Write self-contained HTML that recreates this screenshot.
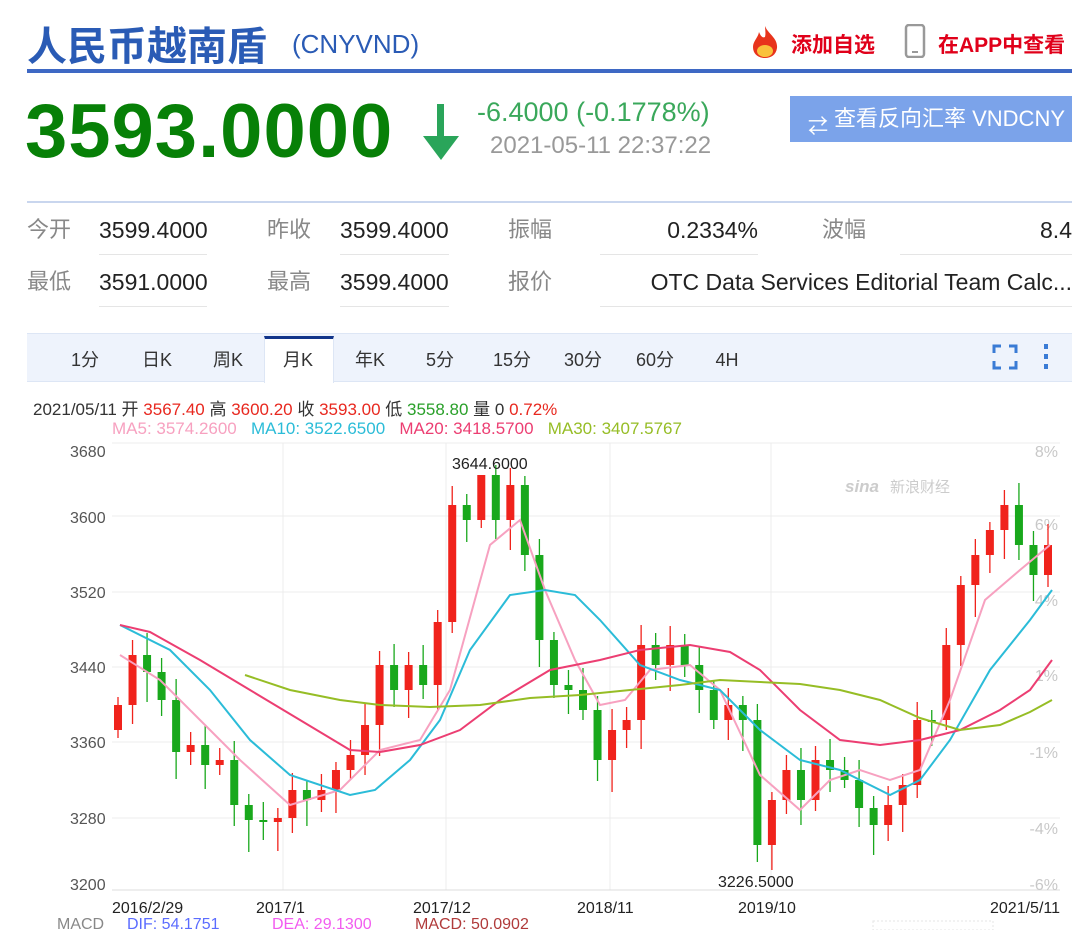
<!DOCTYPE html><html><head><meta charset="utf-8"><style>
*{margin:0;padding:0;box-sizing:border-box}
body{width:1080px;height:930px;overflow:hidden;background:#fff;font-family:"Liberation Sans","Noto Sans CJK SC",sans-serif;position:relative}
.a{position:absolute;white-space:nowrap}
.lab{color:#888;font-size:22px;line-height:28px}
.val{color:#222;font-size:23px;line-height:28px}
.ul{position:absolute;height:1px;background:#e5e5e5}
.tab{position:absolute;top:348px;font-size:18px;line-height:24px;color:#333;transform:translateX(-50%)}
</style></head><body>
<div class="a" style="left:27px;top:14px;font-size:40px;font-weight:bold;color:#2a5bb5">人民币越南盾</div>
<div class="a" style="left:292px;top:29px;font-size:26px;color:#2a5bb5">(CNYVND)</div>
<svg class="a" style="left:748px;top:24px" width="34" height="36" viewBox="0 0 34 36"><path d="M17 2C20 10 30 14 29 24 28 31 23 34 17 34 10 34 5 30 5 23 5 17 10 14 11 8 13 13 15 14 17 13 18 9 17 5 17 2Z" fill="#e8341c"/><ellipse cx="17" cy="27" rx="8" ry="6" fill="#f9c23c"/></svg>
<div class="a" style="left:791px;top:29px;font-size:21px;font-weight:bold;color:#e0001a">添加自选</div>
<svg class="a" style="left:904px;top:24px" width="22" height="34"><rect x="2" y="1" width="18" height="32" rx="3" fill="none" stroke="#999" stroke-width="2.5"/><line x1="8" y1="28" x2="14" y2="28" stroke="#999" stroke-width="2"/></svg>
<div class="a" style="left:938px;top:29px;font-size:21px;font-weight:bold;color:#e0001a">在APP中查看</div>
<div class="a" style="left:27px;top:69px;width:1045px;height:4px;background:#3e68c4"></div>
<div class="a" style="left:25px;top:88px;font-size:76px;font-weight:bold;color:#078007;letter-spacing:1px">3593.0000</div>
<svg class="a" style="left:420px;top:102px" width="42" height="60"><rect x="17" y="2" width="7" height="36" fill="#2aa55a"/><path d="M3 34 L39 34 L21 58Z" fill="#2aa55a"/></svg>
<div class="a" style="left:477px;top:97px;font-size:27px;color:#3aa85b">-6.4000 (-0.1778%)</div>
<div class="a" style="left:490px;top:132px;font-size:24px;color:#999">2021-05-11 22:37:22</div>
<div class="a" style="left:790px;top:96px;width:282px;height:46px;background:#7ba3ea;color:#fff;font-size:22px;line-height:46px;padding-left:44px">查看反向汇率 VNDCNY</div>
<div class="a" style="left:808px;top:110px;color:#fff;font-size:20px">⇄</div>
<div class="a" style="left:27px;top:201px;width:1045px;height:2px;background:#c9d6ee"></div>
<div class="a lab" style="left:27px;top:216px">今开</div><div class="a val" style="left:99px;top:216px">3599.4000</div>
<div class="a lab" style="left:267px;top:216px">昨收</div><div class="a val" style="left:340px;top:216px">3599.4000</div>
<div class="a lab" style="left:508px;top:216px">振幅</div><div class="a val" style="right:322px;top:216px">0.2334%</div>
<div class="a lab" style="left:822px;top:216px">波幅</div><div class="a val" style="right:8px;top:216px">8.4</div>
<div class="a lab" style="left:27px;top:268px">最低</div><div class="a val" style="left:99px;top:268px">3591.0000</div>
<div class="a lab" style="left:267px;top:268px">最高</div><div class="a val" style="left:340px;top:268px">3599.4000</div>
<div class="a lab" style="left:508px;top:268px">报价</div><div class="a val" style="right:8px;top:268px">OTC Data Services Editorial Team Calc...</div>
<div class="ul" style="left:99px;top:254px;width:108px"></div><div class="ul" style="left:340px;top:254px;width:109px"></div><div class="ul" style="left:600px;top:254px;width:158px"></div><div class="ul" style="left:900px;top:254px;width:172px"></div>
<div class="ul" style="left:99px;top:306px;width:108px"></div><div class="ul" style="left:340px;top:306px;width:109px"></div><div class="ul" style="left:600px;top:306px;width:472px"></div>
<div class="a" style="left:27px;top:333px;width:1045px;height:49px;background:#eef3fc;border-top:1px solid #dde6f5;border-bottom:1px solid #dde6f5"></div>
<div class="a" style="left:264px;top:336px;width:70px;height:47px;background:#fff;border-top:3px solid #12358a;border-left:1px solid #dde6f5;border-right:1px solid #dde6f5"></div>
<div class="tab" style="left:85px">1分</div><div class="tab" style="left:157px">日K</div><div class="tab" style="left:228px">周K</div><div class="tab" style="left:298px">月K</div><div class="tab" style="left:370px">年K</div><div class="tab" style="left:440px">5分</div><div class="tab" style="left:512px">15分</div><div class="tab" style="left:583px">30分</div><div class="tab" style="left:655px">60分</div><div class="tab" style="left:727px">4H</div>
<svg class="a" style="left:992px;top:344px" width="26" height="26" fill="none" stroke="#3a7bd5" stroke-width="3"><path d="M2 9V2H9M17 2H24V9M24 17V24H17M9 24H2V17"/></svg>
<svg class="a" style="left:1043px;top:343px" width="8" height="28" fill="#3a7bd5"><rect x="1" y="1" width="4" height="5"/><rect x="1" y="11" width="4" height="5"/><rect x="1" y="21" width="4" height="5"/></svg>
<div class="a" style="left:33px;top:395px;font-size:17px;color:#333">2021/05/11 开 <span style="color:#e8281f">3567.40</span> 高 <span style="color:#e8281f">3600.20</span> 收 <span style="color:#e8281f">3593.00</span> 低 <span style="color:#2aa02a">3558.80</span> 量 0 <span style="color:#e8281f">0.72%</span></div>
<div class="a" style="left:112px;top:419px;font-size:17px"><span style="color:#f7a1c0">MA5: 3574.2600</span>&nbsp;&nbsp;&nbsp;<span style="color:#2bbcd8">MA10: 3522.6500</span>&nbsp;&nbsp;&nbsp;<span style="color:#ec3e72">MA20: 3418.5700</span>&nbsp;&nbsp;&nbsp;<span style="color:#96bd25">MA30: 3407.5767</span></div>
<svg class="a" style="left:0;top:0" width="1080" height="930" id="ch" font-family="Liberation Sans, sans-serif">
<g stroke="#ececec" stroke-width="1">
<line x1="112" y1="443" x2="1060" y2="443"/><line x1="112" y1="516" x2="1060" y2="516"/><line x1="112" y1="592" x2="1060" y2="592"/><line x1="112" y1="667" x2="1060" y2="667"/><line x1="112" y1="742" x2="1060" y2="742"/><line x1="112" y1="818" x2="1060" y2="818"/>
<line x1="283" y1="443" x2="283" y2="890"/><line x1="446" y1="443" x2="446" y2="890"/><line x1="610" y1="443" x2="610" y2="890"/><line x1="771" y1="443" x2="771" y2="890"/>
</g>
<line x1="112" y1="890" x2="1060" y2="890" stroke="#ddd"/>
<g font-size="16" fill="#555"><text x="70" y="457">3680</text><text x="70" y="523">3600</text><text x="70" y="598">3520</text><text x="70" y="673">3440</text><text x="70" y="748">3360</text><text x="70" y="824">3280</text><text x="70" y="890">3200</text></g>
<g font-size="16" fill="#c8c8c8" text-anchor="end"><text x="1058" y="457">8%</text><text x="1058" y="530">6%</text><text x="1058" y="606">4%</text><text x="1058" y="681">1%</text><text x="1058" y="758">-1%</text><text x="1058" y="834">-4%</text><text x="1058" y="890">-6%</text></g>
<text x="845" y="492" font-size="17" fill="#ccc" font-style="italic" font-weight="bold">sina</text><text x="890" y="492" font-size="15" fill="#ccc">新浪财经</text>
<g id="cd"></g>
<g fill="none" stroke-width="2">
<polyline stroke="#f7a1c0" points="120,655 160,680 200,720 240,760 290,805 340,790 380,750 420,740 450,690 490,545 520,520 545,590 575,660 600,705 625,700 650,670 690,665 720,690 760,775 800,810 830,780 860,770 890,780 920,770 950,700 985,600 1020,570 1050,545"/>
<polyline stroke="#2bbcd8" points="120,625 170,650 210,690 250,740 290,775 350,795 375,790 410,760 440,720 470,650 510,595 545,590 575,595 600,620 640,665 680,680 720,690 760,730 800,760 840,770 860,780 890,795 920,780 950,740 990,670 1030,620 1052,590"/>
<polyline stroke="#ec3e72" points="120,625 150,632 200,660 250,690 300,720 350,750 380,752 420,745 460,730 500,700 550,670 600,660 640,650 690,645 730,652 760,670 800,710 840,740 880,745 920,740 960,730 1000,710 1030,690 1052,660"/>
<polyline stroke="#96bd25" points="245,675 290,690 340,700 380,705 430,707 480,705 530,698 580,695 630,690 680,685 720,680 760,682 800,684 840,690 880,700 920,718 960,730 1000,725 1030,712 1052,700"/>
</g>
<g font-size="16" fill="#222"><text x="452" y="469">3644.6000</text><text x="718" y="887">3226.5000</text>
<text x="112" y="913">2016/2/29</text><text x="256" y="913">2017/1</text><text x="413" y="913">2017/12</text><text x="577" y="913">2018/11</text><text x="738" y="913">2019/10</text><text x="1060" y="913" text-anchor="end">2021/5/11</text></g>
<g font-size="16"><text x="57" y="929" fill="#888">MACD</text><text x="127" y="929" fill="#5b6cff">DIF: 54.1751</text><text x="272" y="929" fill="#f25cf0">DEA: 29.1300</text><text x="415" y="929" fill="#b03a3a">MACD: 50.0902</text></g>
<rect x="873" y="921" width="120" height="9" fill="none" stroke="#e5e5e5" stroke-dasharray="2 2"/>
</svg>
<script>
var c=[705,655,672,700,752,745,765,760,805,820,822,818,790,800,790,770,755,725,665,690,665,685,622,505,520,475,520,485,555,640,685,690,710,760,730,720,645,665,645,665,690,720,705,720,845,800,770,800,760,770,780,808,825,805,785,720,720,645,585,555,530,505,545,575,545];
var o=730,n=c.length,s=(1048-118)/(n-1),h='';
for(var i=0;i<n;i++){var x=118+i*s,cl=c[i],up=cl<o,col=up?'#f0231c':'#19a81c',t=Math.min(o,cl),b=Math.max(o,cl);if(b-t<2)b=t+2;
var hi=t-8-(i*7%15),lo=b+8+(i*11%25);if(i==25)hi=476;if(i==45)lo=870;
h+='<line x1="'+x+'" x2="'+x+'" y1="'+hi+'" y2="'+lo+'" stroke="'+col+'" stroke-width="1.3"/><rect x="'+(x-4)+'" y="'+t+'" width="8" height="'+(b-t)+'" fill="'+col+'"/>';o=cl;}
document.getElementById('cd').innerHTML=h;
</script>
</body></html>
